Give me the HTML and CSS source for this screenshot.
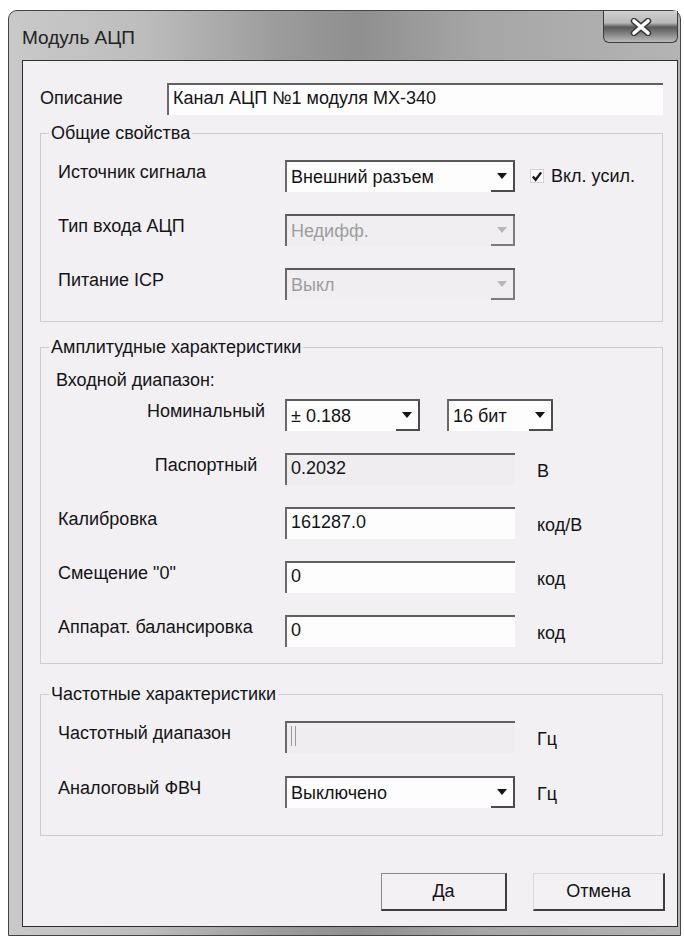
FILE: index.html
```html
<!DOCTYPE html>
<html lang="ru">
<head>
<meta charset="utf-8">
<title>Модуль АЦП</title>
<link rel="stylesheet" href="styles.css">
</head>
<body>
<div class="window">
  <div class="titlebar">
    <span class="title">Модуль АЦП</span>
    <button class="close" type="button" aria-label="Закрыть">
      <svg width="24" height="18" viewBox="0 0 24 18">
        <path d="M5 3 L19 15 M19 3 L5 15" stroke="#3a3a3a" stroke-width="6.5" stroke-linecap="round" fill="none"/>
        <path d="M5 3 L19 15 M19 3 L5 15" stroke="#ffffff" stroke-width="3.6" stroke-linecap="round" fill="none"/>
      </svg>
    </button>
  </div>

  <div class="client">
    <div class="desc-row">
      <span class="desc-label">Описание</span>
      <div class="edit desc-edit">Канал АЦП №1 модуля МХ-340</div>
    </div>

    <fieldset class="group group-common">
      <legend>Общие свойства</legend>
      <div class="row">
        <span class="lbl">Источник сигнала</span>
        <div class="combo"><span class="val">Внешний разъем</span><span class="drop"><i class="tri"></i></span></div>
        <label class="check"><span class="box"><svg width="13" height="13" viewBox="0 0 13 13"><path d="M2 6.5 L5 10 L11 2" stroke="#1a1a1a" stroke-width="2.6" fill="none"/></svg></span>Вкл. усил.</label>
      </div>
      <div class="row">
        <span class="lbl">Тип входа АЦП</span>
        <div class="combo disabled"><span class="val">Недифф.</span><span class="drop"><i class="tri"></i></span></div>
      </div>
      <div class="row">
        <span class="lbl">Питание ICP</span>
        <div class="combo disabled"><span class="val">Выкл</span><span class="drop"><i class="tri"></i></span></div>
      </div>
    </fieldset>

    <fieldset class="group group-ampl">
      <legend>Амплитудные характеристики</legend>
      <div class="sub-title">Входной диапазон:</div>
      <div class="row">
        <span class="lbl lbl-c">Номинальный</span>
        <div class="pair">
          <div class="combo combo-range"><span class="val">± 0.188</span><span class="drop"><i class="tri"></i></span></div>
          <div class="combo combo-bits"><span class="val">16 бит</span><span class="drop"><i class="tri"></i></span></div>
        </div>
      </div>
      <div class="row">
        <span class="lbl lbl-c">Паспортный</span>
        <div class="edit readonly">0.2032</div>
        <span class="unit">В</span>
      </div>
      <div class="row">
        <span class="lbl">Калибровка</span>
        <div class="edit">161287.0</div>
        <span class="unit">код/В</span>
      </div>
      <div class="row">
        <span class="lbl">Смещение "0"</span>
        <div class="edit">0</div>
        <span class="unit">код</span>
      </div>
      <div class="row">
        <span class="lbl">Аппарат. балансировка</span>
        <div class="edit">0</div>
        <span class="unit">код</span>
      </div>
    </fieldset>

    <fieldset class="group group-freq">
      <legend>Частотные характеристики</legend>
      <div class="row">
        <span class="lbl">Частотный диапазон</span>
        <div class="edit readonly"><span class="caret"></span></div>
        <span class="unit">Гц</span>
      </div>
      <div class="row row-hpf">
        <span class="lbl">Аналоговый ФВЧ</span>
        <div class="combo"><span class="val">Выключено</span><span class="drop"><i class="tri"></i></span></div>
        <span class="unit">Гц</span>
      </div>
    </fieldset>

    <div class="buttons">
      <button class="btn btn-ok" type="button">Да</button>
      <button class="btn btn-cancel" type="button">Отмена</button>
    </div>
  </div>
</div>
</body>
</html>
```

FILE: styles.css
```css
html, body {
  margin: 0;
  background: #ffffff;
}

body {
  font-family: "Liberation Sans", Arial, sans-serif;
  font-size: 18px;
  color: #141416;
}

/* ---- window frame ---- */
.window {
  box-sizing: border-box;
  width: 673px;
  height: 926px;
  margin: 10px 0 0 8px;
  padding: 0 2px 8px 13px;
  border: 1px solid #444;
  border-radius: 9px 9px 0 0;
  display: flex;
  flex-direction: column;
  background:
    linear-gradient(90deg, #c9c9c9 0%, #bdbdbd 20%, #9c9c9c 40%, #8f8f8f 52%, #a6a6a6 70%, #b4b4b4 100%);
}

.titlebar {
  height: 49px;
  display: flex;
  align-items: flex-start;
  justify-content: space-between;
}

.title {
  margin-top: 16px;
  font-size: 19px;
  color: #232323;
}

.close {
  width: 75px;
  height: 32px;
  margin: 0;
  padding: 0;
  border: 1px solid #3b3b3b;
  border-top: none;
  border-radius: 0 0 6px 6px;
  display: flex;
  align-items: center;
  justify-content: center;
  background: linear-gradient(180deg, #d0d0d0 0%, #b9b9b9 38%, #5a5a5a 52%, #6e6e6e 64%, #bcbcbc 100%);
}

/* ---- client area ---- */
.client {
  flex: 1;
  box-sizing: border-box;
  border: 1px solid #2f2f2f;
  background: #f2f0f3;
  padding: 21px 14px 0 17px;
  display: flex;
  flex-direction: column;
}

.desc-row {
  display: flex;
  align-items: center;
  height: 34px;
}

.desc-label {
  width: 127px;
  padding-bottom: 2px;
}

.desc-edit {
  flex: 1;
  height: 34px;
}

/* ---- group boxes ---- */
.group {
  margin: 0;
  padding: 0 0 0 17px;
  border: 1px solid #cdcbcf;
  min-width: 0;
}

.group legend {
  margin-left: -9px;
  padding: 0 2px;
  line-height: 22px;
}

.group-common {
  margin-top: 6px;
  padding-top: 16px;
  padding-bottom: 21px;
}

.group-ampl {
  margin-top: 14px;
  padding-top: 11px;
  padding-bottom: 16px;
}

.group-freq {
  margin-top: 19px;
  padding-top: 16px;
  padding-bottom: 27px;
}

.row {
  display: grid;
  grid-template-columns: 205px 230px auto;
  column-gap: 22px;
  align-items: center;
  height: 32px;
  margin-top: 22px;
}

.group-common .row:first-of-type,
.group-freq .row:first-of-type {
  margin-top: 0;
}

.sub-title + .row {
  margin-top: 8px;
}

.row-hpf {
  margin-top: 23px;
}

.sub-title {
  line-height: 22px;
  margin-left: -2px;
}

.lbl {
  padding-bottom: 8px;
  white-space: nowrap;
}

.lbl-c {
  justify-self: start;
  width: 120px;
  margin-left: 88px;
  text-align: center;
}

.unit {
  padding-top: 4px;
}

/* ---- edit fields ---- */
.edit {
  box-sizing: border-box;
  height: 32px;
  background: #fdfdfd;
  border-top: 2px solid #606060;
  border-left: 2px solid #6a6a6a;
  padding-left: 4px;
  line-height: 26px;
  white-space: nowrap;
}

.edit.readonly {
  background: #efedf0;
}

.caret {
  display: inline-block;
  width: 3px;
  height: 20px;
  margin-top: 3px;
  border-left: 1px solid #9a9a9a;
  border-right: 1px solid #9a9a9a;
  vertical-align: top;
}

/* ---- combo boxes ---- */
.combo {
  box-sizing: border-box;
  height: 32px;
  display: flex;
  background: #fdfdfd;
  border-top: 2px solid #5a5a5a;
  border-left: 2px solid #6a6a6a;
}

.combo .val {
  flex: 1;
  padding-left: 4px;
  line-height: 30px;
  white-space: nowrap;
  overflow: hidden;
}

.combo .drop {
  width: 24px;
  box-sizing: border-box;
  border-right: 2px solid #4c4c4c;
  border-bottom: 2px solid #4c4c4c;
  display: flex;
  align-items: center;
  justify-content: center;
}

.tri {
  width: 0;
  height: 0;
  border-left: 5px solid transparent;
  border-right: 5px solid transparent;
  border-top: 6px solid #151515;
}

.combo.disabled {
  background: #f0eef1;
  color: #9d9d9f;
}

.combo.disabled .drop {
  border-color: #7c7c7c;
}

.combo.disabled .tri {
  border-top-color: #b8b8b8;
}

.pair {
  display: flex;
  gap: 27px;
}

.combo-range {
  width: 135px;
  flex: none;
}

.combo-bits {
  width: 106px;
  flex: none;
}

/* ---- checkbox ---- */
.check {
  display: flex;
  align-items: center;
  margin-left: -7px;
  gap: 7px;
  white-space: nowrap;
}

.check .box {
  width: 14px;
  height: 14px;
  box-sizing: border-box;
  border: 1px solid #d2d2d2;
  background: #fbfbfb;
  display: flex;
  align-items: center;
  justify-content: center;
}

/* ---- buttons ---- */
.buttons {
  display: flex;
  justify-content: flex-end;
  gap: 26px;
  margin-top: 37px;
  margin-right: -2px;
}

.btn {
  box-sizing: border-box;
  height: 38px;
  font-family: inherit;
  font-size: 18px;
  color: #141416;
  background: #f3f1f4;
  border: 1px solid #8a8a8a;
  border-right: 2px solid #3e3e3e;
  border-bottom: 2px solid #3e3e3e;
  padding: 0;
}

.btn-ok {
  width: 126px;
}

.btn-cancel {
  width: 132px;
  border-top-color: #d8d8d8;
  border-left-color: #d8d8d8;
}
```
